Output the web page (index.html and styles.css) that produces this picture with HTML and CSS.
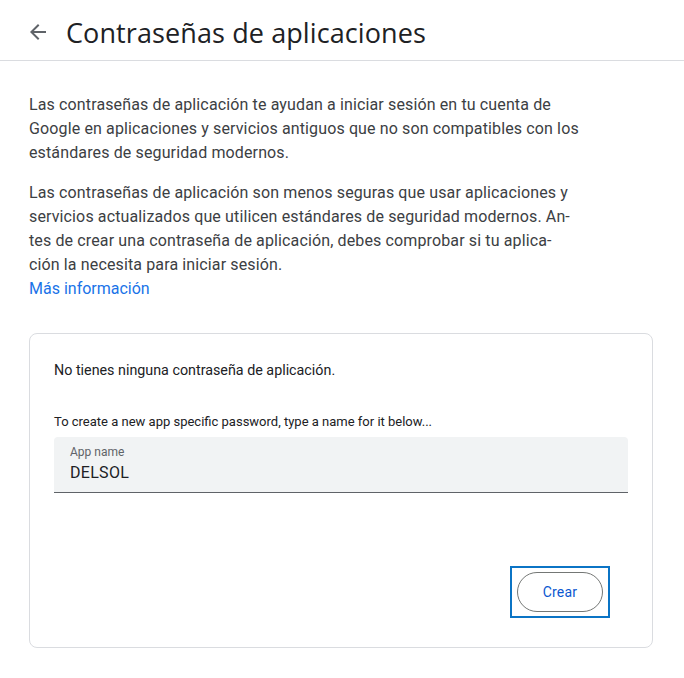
FILE: index.html
```
<!DOCTYPE html>
<html lang="es">
<head>
<meta charset="utf-8">
<link rel="stylesheet" href="styles.css">
</head>
<body>
<header class="top">
  <svg class="back" width="24" height="24" viewBox="0 0 24 24"><path d="M20 11H7.83l5.59-5.59L12 4l-8 8 8 8 1.41-1.41L7.83 13H20v-2z" fill="#5f6368"/></svg>
  <h1 class="title">Contraseñas de aplicaciones</h1>
</header>
<main class="content">
  <p class="para">Las contraseñas de aplicación te ayudan a iniciar sesión en tu cuenta de<br>Google en aplicaciones y servicios antiguos que no son compatibles con los<br>estándares de seguridad modernos.</p>
  <p class="para">Las contraseñas de aplicación son menos seguras que usar aplicaciones y<br>servicios actualizados que utilicen estándares de seguridad modernos. An-<br>tes de crear una contraseña de aplicación, debes comprobar si tu aplica-<br>ción la necesita para iniciar sesión.<br><a class="link" href="#">Más información</a></p>
  <section class="card">
    <div class="none">No tienes ninguna contraseña de aplicación.</div>
    <div class="hint">To create a new app specific password, type a name for it below...</div>
    <div class="field">
      <div class="label">App name</div>
      <div class="value">DELSOL</div>
    </div>
    <div class="actions">
      <div class="focus"><button class="btn">Crear</button></div>
    </div>
  </section>
</main>
</body>
</html>
```
FILE: styles.css
```
* { box-sizing: border-box; }
html, body { margin: 0; padding: 0; background: #fff; }
body { font-family: Roboto, "Noto Sans", sans-serif; color: #202124; }
.top {
  height: 61px;
  border-bottom: 1px solid #dadce0;
  display: flex;
  align-items: center;
  padding-left: 26px;
  padding-top: 4px;
}
.back { flex: none; }
.title {
  margin: 0 0 0 16px;
  font-family: "Open Sans", Roboto, sans-serif;
  font-weight: 400;
  font-size: 27px;
  color: #202124;
  letter-spacing: 0.1px;
}
.content { padding: 32px 31px 0 29px; }
.para {
  margin: 0 0 16px 0;
  font-size: 16px;
  line-height: 24px;
  color: #3c4043;
  letter-spacing: 0.13px;
}
.link { color: #1a73e8; text-decoration: none; letter-spacing: 0; }
.card {
  margin-top: 32px;
  width: 624px;
  height: 315px;
  border: 1px solid #dadce0;
  border-radius: 8px;
  padding: 26px 24px 0 24px;
  display: flex;
  flex-direction: column;
}
.none { font-size: 14.3px; line-height: 20px; color: #202124; }
.hint { margin-top: 33px; font-size: 13px; line-height: 18px; color: #202124; }
.field {
  margin-top: 6px;
  height: 56px;
  background: #f1f3f4;
  border-radius: 4px 4px 0 0;
  border-bottom: 1px solid #5f6368;
  padding: 7px 16px 0 16px;
}
.label { font-size: 12px; line-height: 16px; color: #5f6368; }
.value { font-size: 16px; line-height: 24px; color: #202124; margin-top: 1px; letter-spacing: 0.3px; }
.actions {
  display: flex;
  justify-content: flex-end;
  padding-right: 18px;
  margin-top: 73px;
}
.focus {
  border: 2px solid #0b74c5;
  padding: 4px 5px 4px 5px;
}
.btn {
  display: block;
  width: 86px;
  height: 40px;
  border: 1px solid #747775;
  border-radius: 20px;
  background: #fff;
  font-family: Roboto, sans-serif;
  font-size: 14px;
  color: #0b57d0;
  letter-spacing: 0.2px;
}
```
